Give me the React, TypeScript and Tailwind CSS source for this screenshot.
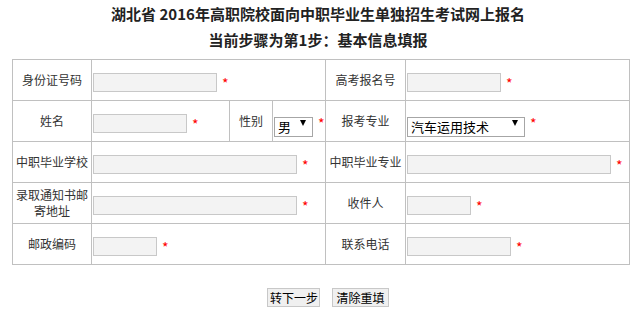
import { ChangeEvent, useState } from 'react';

const font = "font-['Noto_Sans_CJK_SC','Liberation_Sans',sans-serif]";

function Star() {
  return <span className="ml-[5px] align-middle text-[14px] leading-none text-[#ff0000]">*</span>;
}

function Field({ w }: { w: string }) {
  return (
    <input
      type="text"
      className={`${w} h-[19px] border border-[#c8c8c8] bg-[#f3f3f3] align-middle outline-none`}
    />
  );
}

function Select({ w, value, options }: { w: string; value: string; options: string[] }) {
  const [v, setV] = useState(value);
  return (
    <span className={`relative inline-block ${w} h-[20px] align-middle`}>
      <select
        value={v}
        onChange={(e: ChangeEvent<HTMLSelectElement>) => setV(e.target.value)}
        className="h-full w-full appearance-none border border-[#a6a6a6] bg-white pl-[3px] text-[13px] leading-[18px] text-black outline-none"
      >
        {options.map((o) => (
          <option key={o}>{o}</option>
        ))}
      </select>
      {/* dropdown arrow */}
      <span className="pointer-events-none absolute right-[7px] top-[7px] h-0 w-0 border-x-[3.5px] border-t-[6px] border-x-transparent border-t-black" />
    </span>
  );
}

const label = 'border border-[#c0c0c0] text-center align-middle text-[12px] leading-[16px] text-[#333]';
const cell = 'border border-[#c0c0c0] pl-[1px] align-middle';
const btn = 'h-[19px] whitespace-nowrap border border-[#c8c8c8] bg-[#f0f0f0] px-[2px] text-[12px] leading-[17px] text-black';

export default function App() {
  return (
    <div className={`${font} w-[636px] h-[318px] bg-white`}>
      <div className="pt-[4px] text-center">
        <h1 className="text-[15px] font-bold leading-[20px] text-[#222]">湖北省 2016年高职院校面向中职毕业生单独招生考试网上报名</h1>
        <h2 className="mt-[6px] text-[15px] font-bold leading-[20px] text-[#222]">当前步骤为第1步：基本信息填报</h2>
      </div>

      <table className="ml-[12px] mt-[9px] w-[617px] table-fixed border-collapse">
        <colgroup>
          <col className="w-[79px]" />
          <col className="w-[138px]" />
          <col className="w-[43px]" />
          <col className="w-[53px]" />
          <col className="w-[80px]" />
          <col className="w-[224px]" />
        </colgroup>
        <tbody>
          <tr className="h-[41px]">
            <td className={label}>身份证号码</td>
            <td className={cell} colSpan={3}>
              <Field w="w-[124px]" />
              <Star />
            </td>
            <td className={label}>高考报名号</td>
            <td className={cell}>
              <Field w="w-[94px]" />
              <Star />
            </td>
          </tr>
          <tr className="h-[41px]">
            <td className={label}>姓名</td>
            <td className={cell}>
              <Field w="w-[94px]" />
              <Star />
            </td>
            <td className={label}>性别</td>
            <td className={`${cell} whitespace-nowrap`}>
              <Select w="w-[39px]" value="男" options={['男', '女']} />
              <Star />
            </td>
            <td className={label}>报考专业</td>
            <td className={cell}>
              <Select w="w-[118px]" value="汽车运用技术" options={['汽车运用技术', '机电一体化技术', '计算机应用技术']} />
              <Star />
            </td>
          </tr>
          <tr className="h-[41px]">
            <td className={label}>中职毕业学校</td>
            <td className={cell} colSpan={3}>
              <Field w="w-[204px]" />
              <Star />
            </td>
            <td className={label}>中职毕业专业</td>
            <td className={cell}>
              <Field w="w-[204px]" />
              <Star />
            </td>
          </tr>
          <tr className="h-[41px]">
            <td className={`${label} px-[1px]`}>录取通知书邮寄地址</td>
            <td className={cell} colSpan={3}>
              <Field w="w-[204px]" />
              <Star />
            </td>
            <td className={label}>收件人</td>
            <td className={cell}>
              <Field w="w-[64px]" />
              <Star />
            </td>
          </tr>
          <tr className="h-[41px]">
            <td className={label}>邮政编码</td>
            <td className={cell} colSpan={3}>
              <Field w="w-[64px]" />
              <Star />
            </td>
            <td className={label}>联系电话</td>
            <td className={cell}>
              <Field w="w-[104px]" />
              <Star />
            </td>
          </tr>
        </tbody>
      </table>

      <div className="mt-[23px] flex justify-center gap-[12px] pl-[20px]">
        <button className={`${btn} w-[53px]`}>转下一步</button>
        <button className={`${btn} w-[57px]`}>清除重填</button>
      </div>
    </div>
  );
}
